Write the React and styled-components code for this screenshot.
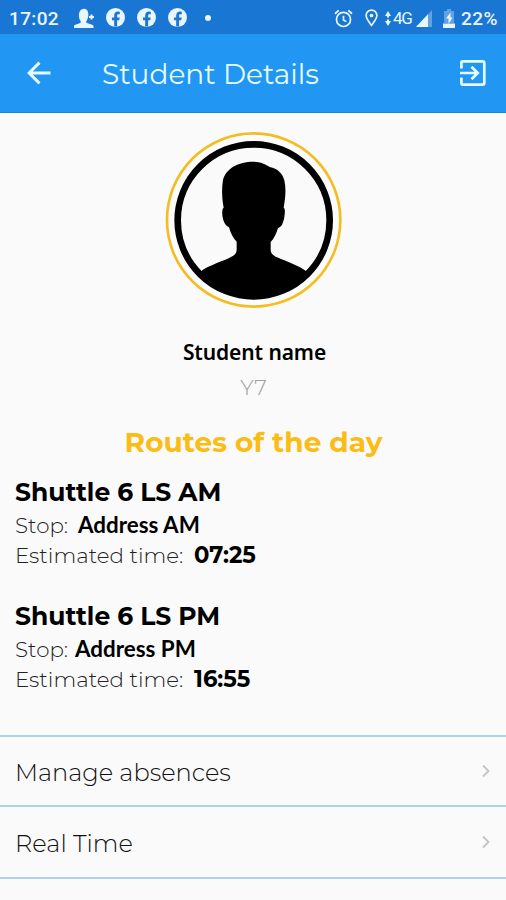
import React from 'react';
import styled, { createGlobalStyle } from 'styled-components';

const GlobalStyle = createGlobalStyle`
    * {
        box-sizing: border-box;
    }

    body {
        margin: 0;
        background: #fafafa;
    }
`;

const Screen = styled.div`
    width: 506px;
    height: 900px;
    overflow: hidden;
    background: #fafafa;
    color: #000;
    font-family: Montserrat, Inter, sans-serif;
    white-space: nowrap;
`;

const StatusBar = styled.div`
    display: flex;
    align-items: center;
    height: 34px;
    padding: 2px 7px 0 9px;
    background: #1976d2;
    color: #e9f5ff;
    font: 500 19px Roboto, sans-serif;

    svg {
        display: block;
        flex: none;
    }
`;

const Clock = styled.span`
    width: 65px;
    letter-spacing: 0.35px;
`;

const Notifications = styled.div`
    display: flex;
    align-items: center;
    gap: 12px;
    margin-top: -1px;
`;

const Dot = styled.span`
    width: 6px;
    height: 6px;
    margin-left: 6px;
    border-radius: 50%;
    background: #e9f5ff;
`;

const SystemIcons = styled.div`
    display: flex;
    align-items: center;
    margin-left: auto;
`;

const Location = styled.span`
    margin: 0 7px 0 12px;
`;

const Network = styled.span`
    width: 20px;
    margin: 0 3px 0 2px;
    font-size: 17px;
    font-weight: 400;
    letter-spacing: -1.2px;
`;

const Charge = styled.span`
    margin: 0 6px 0 11px;
`;

const Percent = styled.span`
    width: 38px;
    letter-spacing: 0.4px;
`;

const AppBar = styled.header`
    display: flex;
    align-items: center;
    height: 79px;
    padding: 0 19px 0 24px;
    border-bottom: 1px solid #1b86d9;
    background: #2196f3;
    color: #e6fbff;
`;

const Title = styled.h1`
    flex: 1;
    margin: 2px 0 0 48px;
    font-size: 28px;
    font-weight: 400;
    line-height: 34px;
`;

const IconButton = styled.button`
    display: block;
    padding: 0;
    border: 0;
    background: none;
    color: inherit;

    svg {
        display: block;
    }
`;

const Profile = styled.section`
    display: flex;
    flex-direction: column;
    align-items: center;
    height: 360px;
    padding: 19px 0 0 1px;
`;

const Name = styled.div`
    height: 30px;
    margin-top: 28px;
    padding-left: 2px;
    font: 600 21px/30px 'Noto Sans', sans-serif;
    letter-spacing: -0.1px;
`;

const Grade = styled.div`
    height: 30px;
    margin-top: 5px;
    color: #a0a0a0;
    font-size: 21.5px;
    font-weight: 300;
    line-height: 30px;
`;

const Heading = styled.h2`
    margin: 22px 0 0;
    color: #fbbc15;
    font-size: 28px;
    font-weight: 700;
    line-height: 36px;
`;

const Route = styled.section`
    height: 124px;
    padding: 2px 15px 0;
`;

const RouteName = styled.h3`
    margin: 0;
    font-size: 25px;
    font-weight: 700;
    line-height: 35px;
`;

const Detail = styled.div`
    display: flex;
    align-items: center;
    height: 30px;
`;

const Label = styled.span`
    width: ${props => props.$width}px;
    color: #222;
    font-size: 21.4px;
    font-weight: 300;
`;

const Address = styled.span`
    margin-top: -2px;
    font: 700 22.4px Lato, sans-serif;
`;

const Time = styled.span`
    font-size: 22.7px;
    font-weight: 700;
`;

const Menu = styled.nav`
    margin-top: 14px;
    border-top: 2px solid #abd4e8;
`;

const MenuItem = styled.a`
    display: flex;
    align-items: center;
    justify-content: space-between;
    height: ${props => props.$height}px;
    padding: 0 15px;
    border-bottom: 2px solid #abd4e8;
    color: #111;
    font-size: 24.1px;
    font-weight: 300;
`;

const MenuText = styled.span`
    padding-top: 2px;
`;

const PersonAddIcon = () => (
    <svg width="20" height="20" viewBox="0 0 20 20" fill="currentColor">
        <path d="M0 20v-2.3c1.5-1.8 5.8-1.8 7-3.7-2-3-3-7.5-1-11 2-3 7-3 8 1 1 3 0 7-2 10 1.5 1.9 6 1.9 7.5 3.7V20z" />
        <path d="M17.5 6.5v5M15 9h5" stroke="currentColor" strokeWidth="2" />
    </svg>
);

const FacebookIcon = () => (
    <svg width="19" height="19" viewBox="0 0 19 19">
        <circle cx="9.5" cy="9.5" r="9.5" fill="currentColor" />
        <path
            d="M8.2 18.5v-6.3H6V9.4h2.2V7.6c0-2.7 1.5-4 3.9-4l1.7.1v2.5h-1.2c-1.1 0-1.5.5-1.5 1.4v1.8h2.6l-.5 2.8h-2.1v6.3z"
            fill="#1976d2"
        />
    </svg>
);

const AlarmIcon = () => (
    <svg width="19" height="19" viewBox="0 0 20 20" fill="none" stroke="currentColor" strokeWidth="1.8">
        <circle cx="10" cy="11" r="7.4" />
        <path d="M1 5l4-3.5M19 5l-4-3.5M10 7v4.5l3 1.8" />
    </svg>
);

const PinIcon = () => (
    <svg width="13" height="18" viewBox="0 0 14 19" fill="none" stroke="currentColor" strokeWidth="1.8">
        <path d="M7 17.4C4 13.5 1.2 10.2 1.2 6.8a5.8 5.8 0 0 1 11.6 0c0 3.4-2.8 6.7-5.8 10.6z" />
        <circle cx="7" cy="6.8" r="2" fill="currentColor" stroke="none" />
    </svg>
);

const DataIcon = () => (
    <svg width="6" height="15" viewBox="0 0 6 15" fill="currentColor">
        <path d="M3 0l3 5H4v1.5H2V5H0zM3 15l3-5H4V8.5H2V10H0z" />
    </svg>
);

const SignalIcon = () => (
    <svg width="16" height="17" viewBox="0 0 16 17" fill="currentColor">
        <path d="M16 0v17H0z" opacity="0.35" />
        <path d="M12 4.3V17H0z" />
    </svg>
);

const BatteryIcon = () => (
    <svg width="12" height="19" viewBox="0 0 12 19" fill="currentColor">
        <path d="M4 0h4v2h3v12H1V2h3z" opacity="0.35" />
        <path d="M0 14.5h12V19H0zM7.5 3.5L3 9.5h2.5V15l4-6.5h-2z" />
    </svg>
);

const BackIcon = () => (
    <svg width="30" height="30" viewBox="0 0 30 30" fill="none" stroke="currentColor" strokeWidth="2.9">
        <path d="M26.5 15H5M15.5 4.6L5.1 15l10.4 10.4" />
    </svg>
);

const ExitIcon = () => (
    <svg width="28" height="28" viewBox="0 0 28 28" fill="none" stroke="currentColor" strokeWidth="2.7">
        <path d="M2.4 9.5V3.4c0-.6.4-1 1-1h20.2c1 0 1.7.7 1.7 1.7v19.8c0 1-.7 1.7-1.7 1.7H3.4c-.6 0-1-.4-1-1V18.5" />
        <path d="M1 14h17M12.5 7.8l6.2 6.2-6.2 6.2" />
    </svg>
);

const Avatar = () => (
    <svg width="177" height="177" viewBox="0 0 531 531">
        <circle cx="266" cy="264" r="260" fill="#fcfcfc" stroke="#f4bd24" strokeWidth="8" />
        <circle cx="266" cy="265" r="228" fill="#fafafa" stroke="#000" strokeWidth="20" />
        <path d="M105 420C134 398 174 389 202 373C211 368 215 361 215 353V329C204 318 197 304 192 286C180 282 174 266 172 250C171 238 172 230 176 227C170 196 170 168 174 144C183 109 220 89 265 89C286 89 302 97 314 105C338 109 353 125 358 145C364 171 361 197 356 227C361 230 360 242 358 255C355 273 350 285 339 288C334 305 328 318 317 330V353C317 364 325 371 336 376C368 390 402 401 427 420A228 228 0 0 1 105 420Z" />
    </svg>
);

const Chevron = () => (
    <svg width="10" height="14" viewBox="0 0 10 14" fill="none" stroke="#c4c4c4" strokeWidth="1.8">
        <path d="M2 1.5L7.5 7 2 12.5" />
    </svg>
);

const routes = [
    { name: 'Shuttle 6 LS AM', address: 'Address AM', time: '07:25', stopWidth: 63 },
    { name: 'Shuttle 6 LS PM', address: 'Address PM', time: '16:55', stopWidth: 60 }
];

export default function App() {
    return (
        <Screen>
            <GlobalStyle />

            <StatusBar>
                <Clock>17:02</Clock>
                <Notifications>
                    <PersonAddIcon />
                    <FacebookIcon />
                    <FacebookIcon />
                    <FacebookIcon />
                    <Dot />
                </Notifications>
                <SystemIcons>
                    <AlarmIcon />
                    <Location>
                        <PinIcon />
                    </Location>
                    <DataIcon />
                    <Network>4G</Network>
                    <SignalIcon />
                    <Charge>
                        <BatteryIcon />
                    </Charge>
                    <Percent>22%</Percent>
                </SystemIcons>
            </StatusBar>

            <AppBar>
                <IconButton aria-label="Back">
                    <BackIcon />
                </IconButton>
                <Title>Student Details</Title>
                <IconButton aria-label="Log out">
                    <ExitIcon />
                </IconButton>
            </AppBar>

            <Profile>
                <Avatar />
                <Name>Student name</Name>
                <Grade>Y7</Grade>
                <Heading>Routes of the day</Heading>
            </Profile>

            {routes.map(route => (
                <Route key={route.name}>
                    <RouteName>{route.name}</RouteName>
                    <Detail>
                        <Label $width={route.stopWidth}>Stop:</Label>
                        <Address>{route.address}</Address>
                    </Detail>
                    <Detail>
                        <Label $width={179}>Estimated time:</Label>
                        <Time>{route.time}</Time>
                    </Detail>
                </Route>
            ))}

            <Menu>
                <MenuItem $height={70}>
                    <MenuText>Manage absences</MenuText>
                    <Chevron />
                </MenuItem>
                <MenuItem $height={72}>
                    <MenuText>Real Time</MenuText>
                    <Chevron />
                </MenuItem>
            </Menu>
        </Screen>
    );
}
